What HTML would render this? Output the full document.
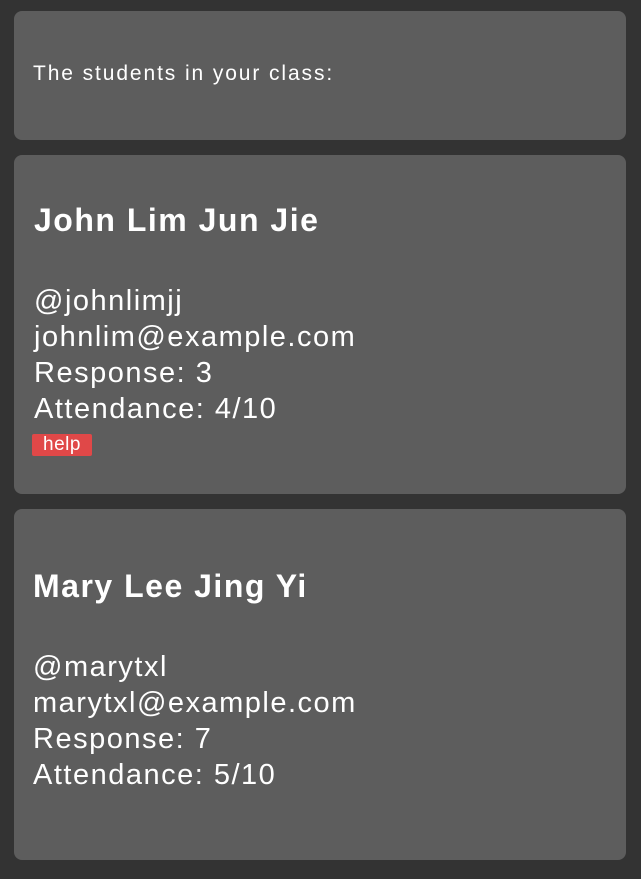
<!DOCTYPE html>
<html><head><style>
html,body{margin:0;padding:0;background:#333;width:641px;height:879px;overflow:hidden;font-family:"Liberation Sans",sans-serif;color:#fff}
.card{position:absolute;left:14px;width:612px;background:#5d5d5d;border-radius:8px}
.t{position:absolute;white-space:nowrap}
.name{font-weight:bold;font-size:32px;letter-spacing:1.5px}
.l{font-size:29px;line-height:36px;letter-spacing:1.5px}
.tag{position:absolute;background:#e04848;font-size:19px;line-height:22px;padding:0 11px;border-radius:2px;letter-spacing:0.5px}
</style></head><body>
<div class="card" style="top:11px;height:129px"></div>
<div class="card" style="top:155px;height:339px"></div>
<div class="card" style="top:509px;height:351px"></div>
<div class="t" style="left:33px;top:62px;font-size:21px;letter-spacing:1.9px">The students in your class:</div>
<div class="t name" style="left:34px;top:202px">John Lim Jun Jie</div>
<div class="t l" style="left:34px;top:283px">@johnlimjj<br>johnlim@example.com<br>Response: 3<br>Attendance: 4/10</div>
<div class="tag" style="left:32px;top:434px">help</div>
<div class="t name" style="left:33px;top:568px">Mary Lee Jing Yi</div>
<div class="t l" style="left:33px;top:649px">@marytxl<br>marytxl@example.com<br>Response: 7<br>Attendance: 5/10</div>
</body></html>
